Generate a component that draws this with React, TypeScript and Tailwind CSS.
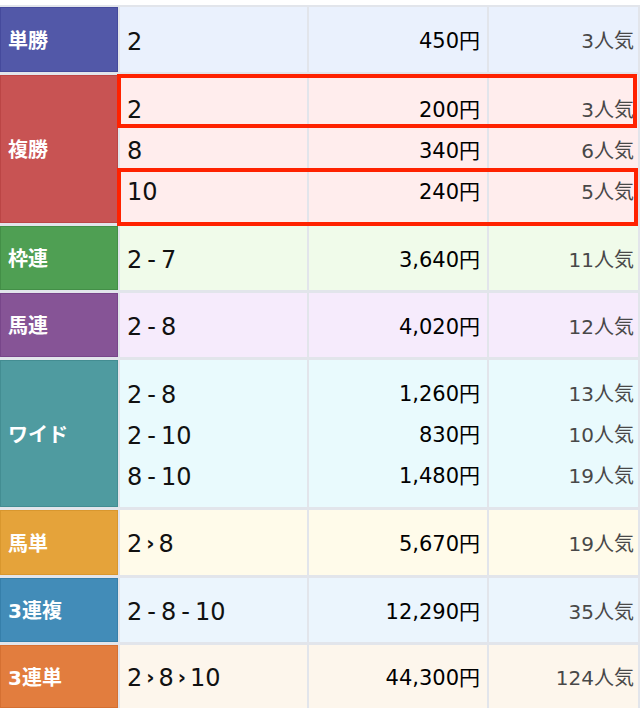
import React from "react";

type Row = {
    label: string;
    labelBg: string;
    rowBg: string;
    height: string;
    combos: React.ReactNode[];
    payouts: string[];
    ranks: string[];
};

const Dash = () => <span className="mx-[5px]">-</span>;
const Arrow = () => <span className="mx-[4px] text-[20px] font-bold relative -top-[2px]">›</span>;

const rows: Row[] = [
    { label: "単勝", labelBg: "bg-[#5258a8] border-[#454a9c]", rowBg: "bg-[#eaf1fd]", height: "h-[65px]", combos: ["2"], payouts: ["450円"], ranks: ["3人気"] },
    { label: "複勝", labelBg: "bg-[#c85353] border-[#bb4545]", rowBg: "bg-[#ffeded]", height: "h-[148px]", combos: ["2", "8", "10"], payouts: ["200円", "340円", "240円"], ranks: ["3人気", "6人気", "5人気"] },
    { label: "枠連", labelBg: "bg-[#4f9f53] border-[#438f47]", rowBg: "bg-[#f0fbea]", height: "h-[64px]", combos: [<>2<Dash />7</>], payouts: ["3,640円"], ranks: ["11人気"] },
    { label: "馬連", labelBg: "bg-[#865496] border-[#78468a]", rowBg: "bg-[#f6ebfc]", height: "h-[64px]", combos: [<>2<Dash />8</>], payouts: ["4,020円"], ranks: ["12人気"] },
    { label: "ワイド", labelBg: "bg-[#4f9ba0] border-[#438d92]", rowBg: "bg-[#e9fafd]", height: "h-[147px]", combos: [<>2<Dash />8</>, <>2<Dash />10</>, <>8<Dash />10</>], payouts: ["1,260円", "830円", "1,480円"], ranks: ["13人気", "10人気", "19人気"] },
    { label: "馬単", labelBg: "bg-[#e5a33a] border-[#d9972e]", rowBg: "bg-[#fffbea]", height: "h-[65px]", combos: [<>2<Arrow />8</>], payouts: ["5,670円"], ranks: ["19人気"] },
    { label: "3連複", labelBg: "bg-[#428cb8] border-[#367faa]", rowBg: "bg-[#ebf5fd]", height: "h-[64px]", combos: [<>2<Dash />8<Dash />10</>], payouts: ["12,290円"], ranks: ["35人気"] },
    { label: "3連単", labelBg: "bg-[#e27d3e] border-[#d57032]", rowBg: "bg-[#fdf6ec]", height: "h-[63px]", combos: [<>2<Arrow />8<Arrow />10</>], payouts: ["44,300円"], ranks: ["124人気"] },
];

const App = () => {
    return (
        <div className="w-[640px] h-[711px] bg-white pt-[5px] overflow-hidden" style={{ fontFamily: '"DejaVu Sans", "Noto Sans CJK JP", sans-serif' }}>
            <div className="bg-[#e2e5eb] pt-[2px] pr-[2px] flex flex-col gap-[3px]">
                {rows.map((row, i) => (
                    <div key={i} className={`relative grid grid-cols-[118px_187px_178px_1fr] gap-x-[2px] ${row.height}`}>
                        {/* label */}
                        <div className={`flex items-center pl-[7px] pt-[2px] border text-white font-bold text-[20px] ${row.labelBg}`}>
                            {row.label}
                        </div>
                        <div className={`flex flex-col justify-center pl-[7px] pt-[5px] text-[#111] text-[24px] leading-[41px] ${row.rowBg}`}>
                            {row.combos.map((c, j) => (
                                <div key={j}>{c}</div>
                            ))}
                        </div>
                        <div className={`flex flex-col justify-center items-end pr-[7px] pt-[4px] text-[#000] text-[21px] leading-[41px] ${row.rowBg}`}>
                            {row.payouts.map((p, j) => (
                                <div key={j}>{p}</div>
                            ))}
                        </div>
                        <div className={`flex flex-col justify-center items-end pr-[4px] pt-[4px] text-[#484848] text-[20px] leading-[41px] ${row.rowBg}`}>
                            {row.ranks.map((r, j) => (
                                <div key={j}>{r}</div>
                            ))}
                        </div>

                        {/* highlighted results */}
                        {row.label === "複勝" && (
                            <>
                                <div className="absolute left-[117px] top-[-1px] w-[520px] h-[54px] border-[4px] border-[#ff2200]" />
                                <div className="absolute left-[117px] top-[93px] w-[521px] h-[58px] border-[4px] border-[#ff2200]" />
                            </>
                        )}
                    </div>
                ))}
            </div>
        </div>
    );
};

export default App;
